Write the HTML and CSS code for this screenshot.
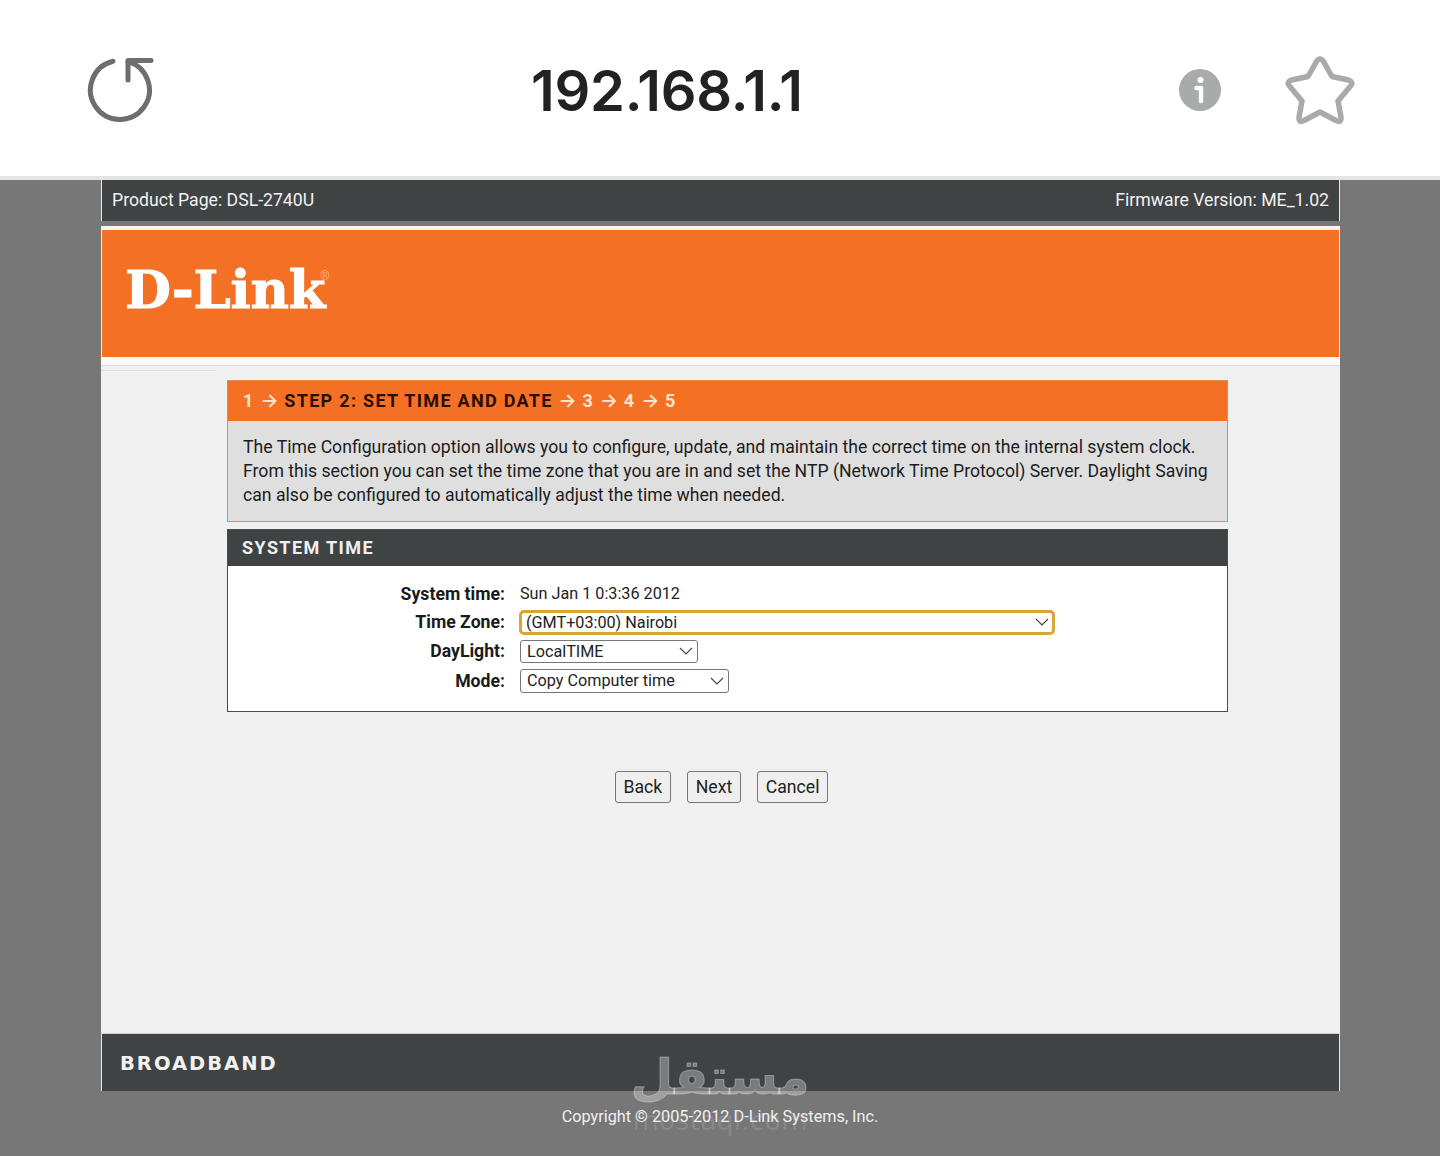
FILE: index.html
```html
<!DOCTYPE html>
<html lang="en">
<head>
  <meta charset="UTF-8" />
  <title>192.168.1.1</title>
  <link rel="stylesheet" href="styles.css">
</head>
<body>
  <header class="browser-bar">
    <svg class="icon-reload" width="70" height="70" viewBox="0 0 70 70" fill="none" stroke="#6e6e6e" stroke-width="5" stroke-linecap="round" stroke-linejoin="round">
      <path d="M28 6.300A29.500 29.500 0 1 0 43 6.600"/>
      <path d="M43 25V5.500H66"/>
    </svg>
    <div class="address">192.168.1.1</div>
    <svg class="icon-info" width="44" height="44" viewBox="0 0 44 44">
      <circle cx="22" cy="22" r="21" fill="#a9abab"/>
      <circle cx="22.500" cy="12" r="3" fill="#fff"/>
      <path d="M18.500 20H23V33" fill="none" stroke="#fff" stroke-width="4.500" stroke-linecap="round" stroke-linejoin="round"/>
    </svg>
    <svg class="icon-star" width="74" height="74" viewBox="0 0 74 74">
      <path d="M33.500 8.500Q37 3.500 40.500 8.500L49 23.500L65.500 27Q71 29 67.500 33L55 48L58 64Q58.500 70 53 67.500L37 59L21 67.500Q15.500 70 16 64L19 48L6.500 33Q3 29 8.500 27L25 23.500Z" fill="none" stroke="#a9abab" stroke-width="5.500" stroke-linejoin="round"/>
    </svg>
  </header>

  <div class="router-page">
    <div class="top-bar">
      <span>Product Page: DSL-2740U</span>
      <span>Firmware Version: ME_1.02</span>
    </div>

    <div class="banner">
      <div class="logo">D-Link<sup>®</sup></div>
    </div>

    <div class="content">
      <div class="sidebar"></div>
      <main class="main">
        <section class="step-panel">
          <h2 class="step-title">
            <span class="step-done">1 <span class="arrow">→</span> </span>STEP 2: SET TIME AND DATE<span class="step-done"> <span class="arrow">→</span> 3 <span class="arrow">→</span> 4 <span class="arrow">→</span> 5</span>
          </h2>
          <p class="step-text">The Time Configuration option allows you to configure, update, and maintain the correct time on the internal system clock. From this section you can set the time zone that you are in and set the NTP (Network Time Protocol) Server. Daylight Saving can also be configured to automatically adjust the time when needed.</p>
        </section>

        <section class="time-panel">
          <h2 class="time-title">SYSTEM TIME</h2>
          <div class="form-grid">
            <label>System time:</label>
            <div class="time-value">Sun Jan 1 0:3:36 2012</div>
            <label>Time Zone:</label>
            <div><select class="select select--zone"><option>(GMT+03:00) Nairobi</option></select></div>
            <label>DayLight:</label>
            <div><select class="select select--day"><option>LocalTIME</option></select></div>
            <label>Mode:</label>
            <div><select class="select select--mode"><option>Copy Computer time</option></select></div>
          </div>
        </section>

        <div class="buttons">
          <button>Back</button>
          <button>Next</button>
          <button>Cancel</button>
        </div>
      </main>
    </div>

    <footer class="bottom-bar">
      <span class="broadband">BROADBAND</span>
    </footer>
  </div>

  <p class="copyright">Copyright © 2005-2012 D-Link Systems, Inc.</p>

  <div class="watermark" lang="ar">
    <div class="watermark-ar">مستقل</div>
    <div class="watermark-en">mostaql.com</div>
  </div>
</body>
</html>
```

FILE: styles.css
```css
* {
  box-sizing: border-box;
}

html, body {
  margin: 0;
  padding: 0;
}

body {
  position: relative;
  height: 1156px;
  overflow: hidden;
  background-color: #777777;
  font-family: 'Roboto', sans-serif;
  color: #1a1a1a;
}

.browser-bar {
  position: relative;
  height: 180px;
  background: #fff;
  border-bottom: 4px solid #e4e4e4;
  display: flex;
  align-items: center;
}

.icon-reload {
  margin-left: 85px;
  margin-top: 4px;
}

.address {
  margin-left: 376px;
  margin-top: 6px;
  font-family: 'Inter', sans-serif;
  font-size: 56px;
  font-weight: 600;
  letter-spacing: -0.25px;
  color: #222;
}

.icon-info {
  margin-left: auto;
  margin-right: 61px;
  margin-top: 4px;
}

.icon-star {
  margin-right: 83px;
  margin-top: 4px;
}

.router-page {
  width: 1239px;
  margin-left: 101px;
}

.top-bar {
  height: 41px;
  background: #404344;
  border-left: 1px solid #e8e8e8;
  border-right: 1px solid #e8e8e8;
  color: #f2f2f2;
  font-size: 17.650px;
  display: flex;
  align-items: center;
  justify-content: space-between;
  padding: 0 10px 2px;
}

.banner {
  margin-top: 5px;
  height: 131px;
  background: #f47024;
  border-top: 4px solid #fbf3ec;
  border-left: 1px solid #f0f0f0;
  border-right: 1px solid #f0f0f0;
  padding: 23px 0 0 23px;
}

.logo {
  font-family: 'DejaVu Serif', serif;
  font-weight: bold;
  font-size: 53px;
  line-height: 72px;
  letter-spacing: -0.2px;
  color: #fff;
  -webkit-text-stroke: 1px #fff;
}

.logo sup {
  font-family: 'Liberation Sans', sans-serif;
  font-size: 12px;
  font-weight: normal;
  line-height: 0;
  color: #f9b88f;
  -webkit-text-stroke: 0;
  vertical-align: 28px;
  margin-left: -5px;
}

.content {
  display: flex;
  height: 676px;
  background: #f0f0f0;
  border-top: 8px solid #fafafa;
  box-shadow: inset 0 1px 0 #dddddd;
}

.sidebar {
  width: 115px;
  height: 6px;
  border-bottom: 1px solid #e0e0e0;
}

.main {
  width: 1001px;
  margin-left: 11px;
  padding-top: 15px;
}

.step-panel {
  border: 1px solid #ea8a42;
  background: #dfdfdf;
  height: 142px;
}

.step-title {
  margin: 0;
  height: 40px;
  background: #f47024;
  padding-left: 15px;
  font-size: 18px;
  font-weight: 700;
  line-height: 40px;
  letter-spacing: 1.300px;
  color: #2a0e02;
}

.step-done {
  color: #fbe3d0;
}

.arrow {
  font-family: 'Inter', sans-serif;
  font-size: 19px;
  font-weight: 600;
  line-height: 1;
  letter-spacing: 0;
}

.step-text {
  margin: 0;
  padding: 14px 15px 0;
  font-size: 17.650px;
  line-height: 24px;
  color: #1c1c1c;
}

.time-panel {
  margin-top: 7px;
  height: 183px;
  background: #fff;
  border: 1px solid #4a4d4e;
}

.time-title {
  margin: 0;
  height: 36px;
  background: #404344;
  padding-left: 14px;
  color: #f0f0f0;
  font-size: 18px;
  font-weight: 700;
  line-height: 36px;
  letter-spacing: 1.400px;
}

.form-grid {
  display: grid;
  grid-template-columns: 277px 1fr;
  grid-template-rows: 29px 28px 30px 29px;
  column-gap: 15px;
  align-items: center;
  padding-top: 13px;
}

.form-grid label {
  text-align: right;
  font-size: 17.650px;
  font-weight: 700;
  color: #1a1a1a;
}

.time-value {
  font-size: 16.200px;
  color: #222;
}

.select {
  display: block;
  appearance: none;
  font-family: 'Roboto', sans-serif;
  font-size: 16.200px;
  color: #222;
  height: 23px;
  padding: 0 6px;
  border: 1px solid #777;
  border-radius: 3px;
  background-color: #fff;
  background-image: url("data:image/svg+xml,%3Csvg xmlns='http://www.w3.org/2000/svg' width='14' height='8'%3E%3Cpath d='M1 1l6 6 6-6' fill='none' stroke='%23444' stroke-width='1.100'/%3E%3C/svg%3E");
  background-repeat: no-repeat;
  background-position: right 4px center;
}

.select--zone {
  width: 536px;
  height: 25px;
  margin-left: -1px;
  padding: 0 4px;
  border: 3px solid #d9a536;
  border-radius: 5px;
  background-position: right 3px center;
}

.select--day {
  width: 178px;
}

.select--mode {
  width: 209px;
  height: 24px;
}

.buttons {
  display: flex;
  gap: 16.500px;
  margin-top: 59px;
  margin-left: 388px;
}

.buttons button {
  height: 32px;
  padding: 0 7.500px;
  font-family: 'Roboto', sans-serif;
  font-size: 17.650px;
  color: #222;
  background: #efefef;
  border: 1px solid #777;
  border-radius: 3px;
}

.bottom-bar {
  height: 58px;
  background: #404344;
  border-top: 1px solid #cfcfcf;
  border-left: 1px solid #e8e8e8;
  border-right: 1px solid #e8e8e8;
  display: flex;
  align-items: center;
  padding: 2px 0 0 18px;
}

.broadband {
  font-family: 'DejaVu Sans', sans-serif;
  font-weight: bold;
  font-size: 19.500px;
  letter-spacing: 2px;
  color: #f2f2f2;
}

.copyright {
  margin: 16px 0 0;
  text-align: center;
  font-size: 16.250px;
  color: #f0f0f0;
}

.watermark {
  position: absolute;
  left: 620px;
  top: 1038px;
  width: 200px;
  text-align: center;
  color: rgba(255, 255, 255, 0.3);
  font-family: 'DejaVu Sans', sans-serif;
}

.watermark-ar {
  font-size: 49px;
  font-weight: bold;
  line-height: 80px;
  -webkit-text-stroke: 1px rgba(255, 255, 255, 0.3);
}

.watermark-en {
  margin-top: -12px;
  font-size: 27px;
  line-height: 30px;
  color: rgba(255, 255, 255, 0.12);
}
```
